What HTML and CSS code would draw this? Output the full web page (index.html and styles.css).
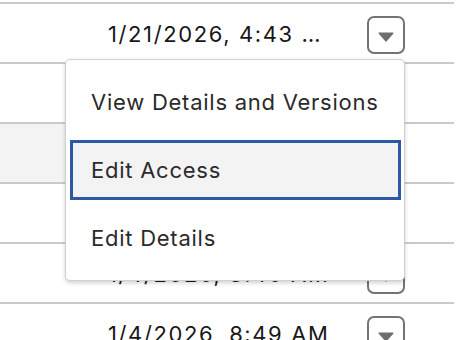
FILE: index.html
```html
<!DOCTYPE html>
<html lang="en">
<head>
<meta charset="utf-8">
<title>Files</title>
<link rel="stylesheet" href="styles.css">
</head>
<body>
<div class="page">
  <div class="table">
    <div class="row">
      <div class="cell date"><span class="txt">1/21/2026, 4:43 PM</span></div>
      <div class="cell action"><button class="menu-btn" aria-label="Show actions"><svg width="16" height="10" viewBox="0 0 16 10"><path d="M1 0.5h14a0.6 0.6 0 0 1 0.45 1L8.5 9.4a0.7 0.7 0 0 1-1 0L0.55 1.5A0.6 0.6 0 0 1 1 0.5z" fill="#6e6e6e"/></svg></button></div>
      <div class="cell end"></div>
    </div>
    <div class="row">
      <div class="cell date"><span class="txt">1/19/2026, 2:12 PM</span></div>
      <div class="cell action"><button class="menu-btn" aria-label="Show actions"><svg width="16" height="10" viewBox="0 0 16 10"><path d="M1 0.5h14a0.6 0.6 0 0 1 0.45 1L8.5 9.4a0.7 0.7 0 0 1-1 0L0.55 1.5A0.6 0.6 0 0 1 1 0.5z" fill="#6e6e6e"/></svg></button></div>
      <div class="cell end"></div>
    </div>
    <div class="row hover">
      <div class="cell date"><span class="txt">1/12/2026, 10:05 AM</span></div>
      <div class="cell action"><button class="menu-btn" aria-label="Show actions"><svg width="16" height="10" viewBox="0 0 16 10"><path d="M1 0.5h14a0.6 0.6 0 0 1 0.45 1L8.5 9.4a0.7 0.7 0 0 1-1 0L0.55 1.5A0.6 0.6 0 0 1 1 0.5z" fill="#6e6e6e"/></svg></button></div>
      <div class="cell end"></div>
    </div>
    <div class="row">
      <div class="cell date"><span class="txt">1/8/2026, 11:30 AM</span></div>
      <div class="cell action"><button class="menu-btn" aria-label="Show actions"><svg width="16" height="10" viewBox="0 0 16 10"><path d="M1 0.5h14a0.6 0.6 0 0 1 0.45 1L8.5 9.4a0.7 0.7 0 0 1-1 0L0.55 1.5A0.6 0.6 0 0 1 1 0.5z" fill="#6e6e6e"/></svg></button></div>
      <div class="cell end"></div>
    </div>
    <div class="row">
      <div class="cell date"><span class="txt">1/4/2026, 3:46 AM</span></div>
      <div class="cell action"><button class="menu-btn" aria-label="Show actions"><svg width="16" height="10" viewBox="0 0 16 10"><path d="M1 0.5h14a0.6 0.6 0 0 1 0.45 1L8.5 9.4a0.7 0.7 0 0 1-1 0L0.55 1.5A0.6 0.6 0 0 1 1 0.5z" fill="#6e6e6e"/></svg></button></div>
      <div class="cell end"></div>
    </div>
    <div class="row">
      <div class="cell date"><span class="txt">1/4/2026, 8:49 AM</span></div>
      <div class="cell action"><button class="menu-btn" aria-label="Show actions"><svg width="16" height="10" viewBox="0 0 16 10"><path d="M1 0.5h14a0.6 0.6 0 0 1 0.45 1L8.5 9.4a0.7 0.7 0 0 1-1 0L0.55 1.5A0.6 0.6 0 0 1 1 0.5z" fill="#6e6e6e"/></svg></button></div>
      <div class="cell end"></div>
    </div>
  </div>

  <div class="menu" role="menu">
    <div class="item" role="menuitem"><span>View Details and Versions</span></div>
    <div class="item focused" role="menuitem"><span class="ring">Edit Access</span></div>
    <div class="item" role="menuitem"><span>Edit Details</span></div>
  </div>
</div>
</body>
</html>
```

FILE: styles.css
```css
* {
  box-sizing: border-box;
}

html, body {
  margin: 0;
  padding: 0;
  background: #ffffff;
}

body {
  font-family: Inter, "Liberation Sans", Arial, sans-serif;
  width: 456px;
  height: 340px;
  overflow: hidden;
}

.page {
  position: relative;
  width: 456px;
  height: 340px;
  overflow: hidden;
  padding-top: 2px;
}

.table {
  width: 454px;
  display: flex;
  flex-direction: column;
}

.row {
  display: flex;
  height: 60px;
  border-top: 2px solid #cacaca;
}

.cell {
  display: flex;
}

.date {
  width: 345px;
  padding-left: 108px;
  padding-top: 1px;
  align-items: center;
}

.txt {
  display: block;
  max-width: 228px;
  white-space: nowrap;
  overflow: hidden;
  text-overflow: ellipsis;
  font-size: 22px;
  line-height: 26px;
  letter-spacing: 1.6px;
  color: #181818;
}

.action {
  width: 60px;
  padding-left: 22px;
  align-items: flex-start;
  padding-top: 12px;
}

.end {
  flex: 1;
}

.hover .date,
.hover .action {
  background: #f3f3f3;
}

.menu-btn {
  width: 38px;
  height: 38px;
  border: 2px solid #747474;
  border-radius: 7px;
  background: #ffffff;
  padding: 3px 0 0;
  display: flex;
  align-items: center;
  justify-content: center;
}

.menu {
  position: absolute;
  left: 65px;
  top: 59px;
  width: 340px;
  height: 222px;
  background: #ffffff;
  border: 1px solid #d0d0d0;
  border-radius: 5px;
  box-shadow: 0 2px 4px rgba(0, 0, 0, 0.18);
  padding: 8px 0;
  display: flex;
  flex-direction: column;
}

.item {
  height: 68px;
  display: flex;
  align-items: center;
  padding-left: 25px;
  font-size: 22px;
  letter-spacing: 0.75px;
  color: #2b2b2b;
}

.item.focused {
  padding: 4px 3px 4px 4px;
  align-items: stretch;
}

.ring {
  flex: 1;
  display: flex;
  align-items: center;
  border: 3px solid #2c59a6;
  background: #f3f3f3;
  padding-left: 18px;
}
```
